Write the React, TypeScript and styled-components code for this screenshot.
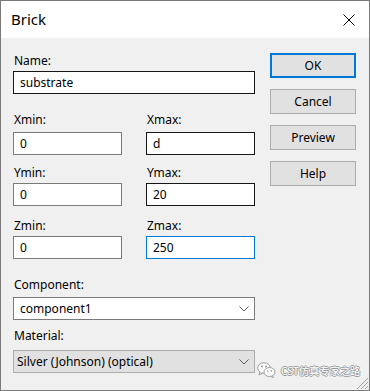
import React from 'react';
import styled, { createGlobalStyle } from 'styled-components';

const GlobalStyle = createGlobalStyle`
  html, body {
    margin: 0;
    padding: 0;
    background: #f0f0f0;
  }
  body {
    font-family: 'Noto Sans', 'Liberation Sans', sans-serif;
    font-size: 12px;
    color: #000;
  }
`;

const Window = styled.div`
  position: relative;
  box-sizing: border-box;
  width: 370px;
  height: 391px;
  border: 1px solid #7a7a7a;
  background: #f0f0f0;
  display: flex;
  flex-direction: column;
  overflow: hidden;
`;

const TitleBar = styled.div`
  height: 37px;
  background: #fff;
  display: flex;
  align-items: center;
  justify-content: space-between;
  padding-left: 10px;
`;

const Title = styled.div`
  font-size: 15px;
  padding-bottom: 1px;
`;

const CloseButton = styled.div`
  width: 40px;
  height: 37px;
  display: flex;
  align-items: center;
  justify-content: center;
`;

const Body = styled.div`
  display: flex;
  gap: 15px;
  padding: 0 12px;
`;

const Form = styled.div`
  width: 242px;
  display: flex;
  flex-direction: column;
`;

const Field = styled.div<{ $top: number; $gap: number }>`
  display: flex;
  flex-direction: column;
  margin-top: ${(p) => p.$top}px;
  gap: ${(p) => p.$gap}px;
`;

const Label = styled.label`
  display: block;
  line-height: 16px;
  padding-left: 1px;
`;

const Pair = styled.div`
  display: grid;
  grid-template-columns: 109px 109px;
  column-gap: 24px;
`;

const TextBox = styled.input<{ $state?: 'idle' | 'hover' | 'focus' }>`
  box-sizing: border-box;
  width: 100%;
  height: 23px;
  margin: 0;
  padding: 0 6px;
  font-family: 'Noto Sans', 'Liberation Sans', sans-serif;
  font-size: 12px;
  color: #000;
  background: #fff;
  outline: none;
  border: 1px solid
    ${(p) =>
      p.$state === 'focus' ? '#0078d7' : p.$state === 'hover' ? '#171717' : '#7a7a7a'};
`;

const Combo = styled.div<{ $disabled?: boolean }>`
  box-sizing: border-box;
  height: 23px;
  display: flex;
  align-items: center;
  justify-content: space-between;
  padding: 0 5px 0 ${(p) => (p.$disabled ? 3 : 6)}px;
  background: ${(p) => (p.$disabled ? '#e1e1e1' : '#fff')};
  border: 1px solid ${(p) => (p.$disabled ? '#adadad' : '#7a7a7a')};
`;

const Buttons = styled.div`
  display: flex;
  flex-direction: column;
  gap: 11px;
  padding-top: 15px;
`;

const Button = styled.div<{ $default?: boolean }>`
  box-sizing: border-box;
  width: 86px;
  height: 25px;
  display: flex;
  align-items: center;
  justify-content: center;
  background: #e1e1e1;
  border: ${(p) => (p.$default ? '2px solid #0078d7' : '1px solid #adadad')};
`;

const Watermark = styled.div`
  position: absolute;
  left: 256px;
  top: 361px;
  display: flex;
  align-items: center;
  gap: 5px;
  font-family: 'Noto Sans CJK SC', 'Noto Sans', sans-serif;
  font-size: 10.5px;
  letter-spacing: -0.3px;
  color: #ffffff;
  text-shadow: 1px 0 0 #9a9a9a, -1px 0 0 #9a9a9a, 0 1px 0 #9a9a9a, 0 -1px 0 #9a9a9a;
`;

const Grip = styled.div`
  position: absolute;
  right: 0;
  bottom: 0;
  width: 15px;
  height: 15px;
`;

const Chevron = () => (
  <svg width="10" height="6" viewBox="0 0 10 6">
    <path d="M0.5 0.5 L5 5 L9.5 0.5" fill="none" stroke="#5a5a5a" strokeWidth="1" />
  </svg>
);

const WeChat = () => (
  <svg width="19" height="16" viewBox="0 0 19 16">
    <ellipse cx="7" cy="6" rx="6.3" ry="5.2" fill="#fff" stroke="#9a9a9a" />
    <path d="M3 10 L2 13 L5.5 11" fill="#fff" stroke="#9a9a9a" />
    <ellipse cx="12.5" cy="10" rx="5.5" ry="4.5" fill="#fff" stroke="#9a9a9a" />
    <path d="M15.5 13.5 L16.5 15.5 L13.5 14.4" fill="#fff" stroke="#9a9a9a" />
    <circle cx="5" cy="4.5" r="0.9" fill="#8a8a8a" />
    <circle cx="9" cy="4.5" r="0.9" fill="#8a8a8a" />
    <circle cx="10.8" cy="9" r="0.8" fill="#8a8a8a" />
    <circle cx="14.2" cy="9" r="0.8" fill="#8a8a8a" />
  </svg>
);

export default function App() {
  return (
    <>
      <GlobalStyle />
      <Window>
        <TitleBar>
          <Title>Brick</Title>
          <CloseButton>
            <svg width="12" height="12" viewBox="0 0 12 12">
              <path d="M0.5 0.5 L11.5 11.5 M11.5 0.5 L0.5 11.5" stroke="#000" strokeWidth="1" />
            </svg>
          </CloseButton>
        </TitleBar>
        <Body>
          <Form>
            <Field $top={15} $gap={2}>
              <Label>Name:</Label>
              <TextBox $state="hover" defaultValue="substrate" readOnly />
            </Field>
            <Pair>
              <Field $top={18} $gap={4}>
                <Label>Xmin:</Label>
                <TextBox defaultValue="0" readOnly />
              </Field>
              <Field $top={18} $gap={4}>
                <Label>Xmax:</Label>
                <TextBox $state="hover" defaultValue="d" readOnly />
              </Field>
            </Pair>
            <Pair>
              <Field $top={10} $gap={2}>
                <Label>Ymin:</Label>
                <TextBox defaultValue="0" readOnly />
              </Field>
              <Field $top={10} $gap={2}>
                <Label>Ymax:</Label>
                <TextBox $state="hover" defaultValue="20" readOnly />
              </Field>
            </Pair>
            <Pair>
              <Field $top={12} $gap={2}>
                <Label>Zmin:</Label>
                <TextBox defaultValue="0" readOnly />
              </Field>
              <Field $top={12} $gap={2}>
                <Label>Zmax:</Label>
                <TextBox $state="focus" defaultValue="250" readOnly />
              </Field>
            </Pair>
            <Field $top={18} $gap={4}>
              <Label>Component:</Label>
              <Combo>
                <span>component1</span>
                <Chevron />
              </Combo>
            </Field>
            <Field $top={8} $gap={6}>
              <Label>Material:</Label>
              <Combo $disabled>
                <span>Silver (Johnson) (optical)</span>
                <Chevron />
              </Combo>
            </Field>
          </Form>
          <Buttons>
            <Button $default>OK</Button>
            <Button>Cancel</Button>
            <Button>Preview</Button>
            <Button>Help</Button>
          </Buttons>
        </Body>
        <Watermark>
          <WeChat />
          <span>CST仿真专家之路</span>
        </Watermark>
        <Grip>
          <svg width="15" height="15" viewBox="0 0 15 15">
            <path d="M14 3 L3 14 M14 7 L7 14 M14 11 L11 14" stroke="#a0a0a0" strokeWidth="1" />
          </svg>
        </Grip>
      </Window>
    </>
  );
}
